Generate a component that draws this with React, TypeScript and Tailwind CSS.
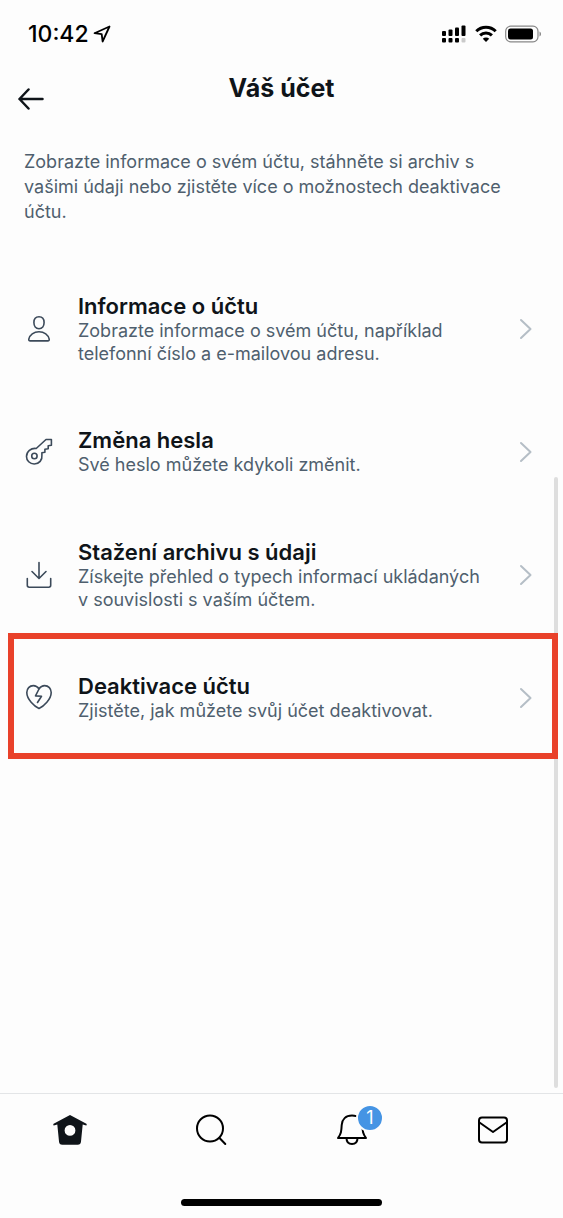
import type { ReactNode } from "react";

type Setting = {
  title: string;
  description: string;
  icon: ReactNode;
  highlighted?: boolean;
};

function PersonIcon() {
  return (
    <svg viewBox="0 0 28 28" className="h-7 w-7" fill="none" stroke="currentColor" strokeWidth="1.6" strokeLinejoin="round">
      <path d="M14 1.7c3.3 0 5.1 2.4 5.1 5.8 0 3.5-1.9 6.2-5.1 6.2s-5.1-2.7-5.1-6.2c0-3.4 1.8-5.8 5.1-5.8Z" />
      <path d="M5.2 25.9h17.6c1 0 1.6-.7 1.4-1.7-.8-4.4-5-7.4-10.2-7.4s-9.4 3-10.2 7.4c-.2 1 .4 1.7 1.4 1.7Z" />
    </svg>
  );
}

function KeyIcon() {
  return (
    <svg viewBox="0 0 28 28" className="h-7 w-7" fill="none" stroke="currentColor" strokeWidth="1.6" strokeLinejoin="round">
      <path d="m11.2 10.5 9.800-9h5.400v5.700l-3.200.5v3l-3.300.6v2.900l-3 .6v2.500c.6 4.600-2.700 8.700-7.700 8.700-4.400 0-7.700-3.400-7.700-7.600 0-4.700 4.400-8.600 9.700-7.900Z" />
      <circle cx="9.4" cy="18" r="2.7" />
    </svg>
  );
}

function DownloadIcon() {
  return (
    <svg viewBox="0 0 28 28" className="h-7 w-7" fill="none" stroke="currentColor" strokeWidth="1.6" strokeLinecap="round" strokeLinejoin="round">
      <path d="M14 1.5v15.8M7 10.500l7 7 7-7" />
      <path d="M2.3 17.500v6.800c0 1.100.8 1.900 1.900 1.900h19.600c1.100 0 1.900-.8 1.900-1.900v-6.800" />
    </svg>
  );
}

function BrokenHeartIcon() {
  return (
    <svg viewBox="0 0 28 28" className="h-7 w-7" fill="none" stroke="currentColor" strokeWidth="1.6" strokeLinecap="round" strokeLinejoin="round">
      <path d="M14 4.800c-1.400-2-3.400-3.200-5.600-3.200-3.900 0-6.600 3.100-6.600 7C1.800 15.300 9.300 22.500 14 24.500c4.700-2 12.200-9.200 12.200-15.900 0-3.900-2.700-7-6.600-7-2.200 0-4.200 1.200-5.600 3.200Z" />
      <path d="m14 5-3.500 6.900 6 .4-4 6.200" />
    </svg>
  );
}

const SETTINGS: Setting[] = [
  {
    title: "Informace o účtu",
    description: "Zobrazte informace o svém účtu, například telefonní číslo a e-mailovou adresu.",
    icon: <PersonIcon />,
  },
  {
    title: "Změna hesla",
    description: "Své heslo můžete kdykoli změnit.",
    icon: <KeyIcon />,
  },
  {
    title: "Stažení archivu s údaji",
    description: "Získejte přehled o typech informací ukládaných v\u00a0souvislosti s vaším účtem.",
    icon: <DownloadIcon />,
  },
  {
    title: "Deaktivace účtu",
    description: "Zjistěte, jak můžete svůj účet deaktivovat.",
    icon: <BrokenHeartIcon />,
    highlighted: true,
  },
];

function StatusBar() {
  return (
    <div className="flex h-[68px] items-center justify-between pl-7 pr-[21px] text-black">
      <div className="flex items-center gap-1">
        <span className="text-[23px] font-medium leading-7">10:42</span>
        <svg viewBox="0 0 18 18" className="h-[18px] w-[18px]" fill="none" stroke="currentColor" strokeWidth="1.8" strokeLinejoin="round">
          <path d="M16.500 1.500 1.500 8.200l7.200.9.900 7.400Z" />
        </svg>
      </div>
      <div className="flex items-center gap-2">
        <svg viewBox="0 0 26 18" className="h-[18px] w-[26px]" fill="currentColor">
          <rect x="1" y="6" width="4" height="5" rx="1" />
          <rect x="7.5" y="4.5" width="4" height="6.5" rx="1" />
          <rect x="14" y="2.5" width="4" height="8.5" rx="1" />
          <rect x="20.5" y="0.5" width="4" height="10.5" rx="1" />
          <rect x="1" y="13" width="4" height="4.5" rx="1" />
          <rect x="7.5" y="13" width="4" height="4.5" rx="1" />
          <rect x="14" y="13" width="4" height="4.5" rx="1" />
          <rect x="20.5" y="13" width="4" height="4.5" rx="1" fillOpacity="0.2" />
        </svg>
        <svg viewBox="0 0 22 18" className="h-[18px] w-[22px]" fill="none" stroke="currentColor" strokeWidth="3">
          <path d="M1.300 6.300a13.700 13.700 0 0 1 19.400 0" />
          <path d="M5.100 10.400a8.300 8.300 0 0 1 11.800 0" />
          <path d="M11 17 7.800 13.700a4.600 4.600 0 0 1 6.400 0Z" fill="currentColor" stroke="none" />
        </svg>
        <svg viewBox="0 0 37 18" className="h-[18px] w-[37px]">
          <rect x="0.7" y="1.2" width="32.3" height="15.6" rx="5" fill="none" stroke="#888" strokeWidth="1.2" />
          <rect x="3" y="3.5" width="25" height="11" rx="2.5" fill="currentColor" />
          <path d="M34.500 6.500c2 .8 2 4.200 0 5Z" fill="#888" />
        </svg>
      </div>
    </div>
  );
}

function SettingRow({ title, description, icon, highlighted }: Setting) {
  return (
    <li className="relative">
      <a href="#" className="flex min-h-[123px] items-center pl-[25px] pr-[30px]">
        <span className="shrink-0 text-[#3c4a5a]">{icon}</span>
        <span className="ml-[25px] min-w-0 flex-1 pr-6">
          <span className="block text-[22px] font-semibold leading-[26px] text-[#0f1419]">{title}</span>
          <span className="block text-[18px] leading-[23px] text-[#4f5f6e]">{description}</span>
        </span>
        <svg viewBox="0 0 14 22" className="h-[22px] w-[14px] shrink-0" fill="none" stroke="#b5bec6" strokeWidth="2" strokeLinecap="round" strokeLinejoin="round">
          <path d="m2 2 9.500 9L2 20" />
        </svg>
      </a>
      {highlighted && (
        <div className="pointer-events-none absolute -top-[3px] bottom-0 left-2 right-[5px] z-10 border-[6px] border-[#e9412a]" />
      )}
    </li>
  );
}

function TabBar() {
  return (
    <nav className="border-t border-[#e3e5e7] text-[#0f1419]">
      <div className="grid h-[72px] grid-cols-4">
        <a href="#" aria-label="Domů" className="flex items-center justify-center">
          <svg viewBox="0 0 34 32" className="h-8 w-[34px]" fill="currentColor">
            <path
              fillRule="evenodd"
              d="M17 .9.600 9.700c-.5.3-.4 1.700.2 1.700l3.500-.8 1.700 16.900c.2 2.100 1.300 3.200 3.300 3.200h15.400c2 0 3.100-1.100 3.300-3.200l1.700-16.900 3.500.8c.6 0 .7-1.400.2-1.700ZM17 11a5.400 5.400 0 1 1 0 10.800A5.400 5.400 0 0 1 17 11Z"
            />
          </svg>
        </a>
        <a href="#" aria-label="Hledat" className="flex items-center justify-center">
          <svg viewBox="0 0 32 32" className="h-8 w-8" fill="none" stroke="black" strokeWidth="2" strokeLinecap="round">
            <circle cx="15" cy="14.5" r="13" />
            <path d="m24.500 24 5.800 6" />
          </svg>
        </a>
        <a href="#" aria-label="Oznámení" className="flex items-center justify-center">
          <span className="relative">
            <svg viewBox="0 0 32 32" className="h-8 w-8" fill="none" stroke="black" strokeWidth="2" strokeLinecap="round" strokeLinejoin="round">
              <path d="M16 1.500c-6.200 0-10 3.800-10.300 9.500-.3 6.200-.5 8.500-3.700 13h28c-3.200-4.500-3.400-6.800-3.700-13C26 5.300 22.200 1.500 16 1.500Z" />
              <path d="M10.500 24c0 3.700 2.200 6 5.500 6s5.500-2.300 5.500-6" />
            </svg>
            <span className="absolute -top-[10px] left-5 flex h-7 w-7 items-center justify-center rounded-full border-2 border-[#fdfdfd] bg-[#4594e4] text-[18px] leading-none text-white">
              1
            </span>
          </span>
        </a>
        <a href="#" aria-label="Zprávy" className="flex items-center justify-center">
          <svg viewBox="0 0 32 32" className="h-8 w-8" fill="none" stroke="black" strokeWidth="2" strokeLinejoin="round">
            <rect x="2" y="3.5" width="28" height="25" rx="3" />
            <path d="m2.500 8.500 13.500 9.500 13.500-9.500" />
          </svg>
        </a>
      </div>
      <div className="flex h-[52px] items-end justify-center pb-3">
        <div className="h-[7px] w-[201px] rounded-full bg-black" />
      </div>
    </nav>
  );
}

export default function App() {
  return (
    <div className="flex min-h-screen flex-col bg-[#fdfdfd] font-['Inter',sans-serif]">
      <StatusBar />

      <header className="grid h-[62px] grid-cols-[1fr_auto_1fr] px-[18px]">
        <button type="button" aria-label="Zpět" className="self-center justify-self-start text-[#0f1419]">
          <svg viewBox="0 0 26 22" className="h-[22px] w-[26px]" fill="none" stroke="currentColor" strokeWidth="2.5" strokeLinecap="round" strokeLinejoin="round">
            <path d="M24.500 11h-23M10.500 1.500 1.500 11l9 9.500" />
          </svg>
        </button>
        <h1 className="pt-1.5 text-[25px] font-bold leading-7 text-[#0f1419]">Váš účet</h1>
      </header>

      <main className="relative flex-1 pt-[19px]">
        <p className="pl-6 pr-12 text-[18px] leading-[25px] text-[#4f5f6e]">
          Zobrazte informace o svém účtu, stáhněte si archiv s vašimi údaji nebo zjistěte více o možnostech deaktivace
          účtu.
        </p>
        <ul className="mt-[43px]">
          {SETTINGS.map((setting) => (
            <SettingRow key={setting.title} {...setting} />
          ))}
        </ul>

        {/* Scroll indicator */}
        <div className="absolute bottom-[5px] right-[5px] top-[36%] w-1 rounded-full bg-[#dedede]" />
      </main>

      <TabBar />
    </div>
  );
}
